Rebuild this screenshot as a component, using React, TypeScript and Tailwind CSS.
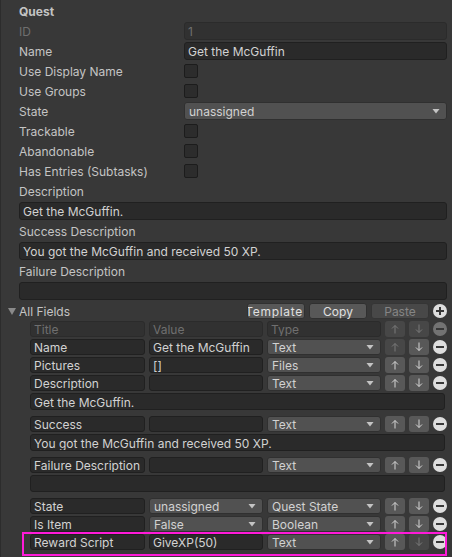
import React from 'react';

const LABEL = 'text-[#c4c4c4]';

function Field({ text, dim, className = '' }: { text?: string; dim?: boolean; className?: string }) {
  return (
    <div
      className={`flex items-center rounded-[3px] border pl-[3px] overflow-hidden whitespace-nowrap ${
        dim ? 'bg-[#313131] border-[#2b2b2b] text-[#6f6f6f]' : 'bg-[#2a2a2a] border-[#202020] text-[#d2d2d2]'
      } ${className}`}
    >
      <span className="translate-y-[1px]">{text}</span>
    </div>
  );
}

function Popup({ text, className = '' }: { text: string; className?: string }) {
  return (
    <div className={`flex items-center justify-between rounded-[3px] border border-[#303030] bg-[#515151] pl-[4px] pr-[6px] text-[#d2d2d2] whitespace-nowrap ${className}`}>
      <span className="translate-y-[1px]">{text}</span>
      <svg width="8" height="5" viewBox="0 0 8 5">
        <path d="M0.5 0h7L4 4.5z" fill="#c4c4c4" />
      </svg>
    </div>
  );
}

function Check() {
  return <div className="h-[14px] w-[14px] rounded-[2px] border border-[#1c1c1c] bg-[#2c2c2c]" />;
}

function Arrow({ up, dim }: { up?: boolean; dim?: boolean }) {
  const c = dim ? '#7a7a7a' : '#d6d6d6';
  return (
    <div
      className={`flex h-[16px] w-[20px] shrink-0 items-center justify-center rounded-[3px] ${
        dim ? 'bg-[#474747]' : 'bg-[#585858]'
      }`}
    >
      <svg width="8" height="10" viewBox="0 0 8 10" className={up ? '' : 'rotate-180'}>
        <path d="M4 1.5V9.5M1 4.5L4 1.5L7 4.5" stroke={c} strokeWidth="1" fill="none" />
      </svg>
    </div>
  );
}

function RoundIcon({ plus, dim }: { plus?: boolean; dim?: boolean }) {
  return (
    <div className="flex h-[16px] w-[14px] shrink-0 items-center justify-center">
      <svg width="14" height="14" viewBox="0 0 14 14">
        <circle cx="7" cy="7" r="7" fill={dim ? '#737373' : '#dedede'} />
        <rect x="3" y="6" width="8" height="2" fill="#383838" />
        {plus && <rect x="6" y="3" width="2" height="8" fill="#383838" />}
      </svg>
    </div>
  );
}

function Row({ label, children, bold, dim }: { label: string; children?: React.ReactNode; bold?: boolean; dim?: boolean }) {
  return (
    <div className="mb-[2px] flex h-[18px] items-center">
      <div className={`w-[165px] shrink-0 translate-y-[1px] ${bold ? 'font-bold' : ''} ${dim ? 'text-[#6f6f6f]' : LABEL}`}>{label}</div>
      <div className="flex h-full flex-1 items-center">{children}</div>
    </div>
  );
}

type Item = {
  title: string;
  value?: string;
  valuePopup?: boolean;
  type: string;
  upDim?: boolean;
  downDim?: boolean;
  area?: string;
  mark?: boolean;
};

const items: Item[] = [
  { title: 'Name', value: 'Get the McGuffin', type: 'Text', upDim: true },
  { title: 'Pictures', value: '[]', type: 'Files' },
  { title: 'Description', value: '', type: 'Text', area: 'Get the McGuffin.' },
  { title: 'Success', value: '', type: 'Text', area: 'You got the McGuffin and received 50 XP.' },
  { title: 'Failure Description', value: '', type: 'Text', area: '' },
  { title: 'State', value: 'unassigned', valuePopup: true, type: 'Quest State' },
  { title: 'Is Item', value: 'False', valuePopup: true, type: 'Boolean' },
  { title: 'Reward Script', value: 'GiveXP(50)', type: 'Text', downDim: true, mark: true },
];

function ListRow({ it }: { it: Item }) {
  return (
    <>
      <div className="relative mb-[2px] flex h-[16px] gap-[4px]">
        <Field text={it.title} className="h-[16px] w-[115px] shrink-0" />
        {it.valuePopup ? (
          <Popup text={it.value!} className="h-[16px] w-[114px] shrink-0" />
        ) : (
          <Field text={it.value} className="h-[16px] w-[114px] shrink-0" />
        )}
        <Popup text={it.type} className="h-[16px] w-[114px] shrink-0" />
        <Arrow up dim={it.upDim} />
        <Arrow dim={it.downDim} />
        <RoundIcon />
        {it.mark && (
          <div className="pointer-events-none absolute -left-[8px] -top-[2px] h-[24px] w-[425px] border-2 border-[#ff1ad9]" />
        )}
      </div>
      {it.area !== undefined && <Field text={it.area} className="mb-[6px] h-[17px] w-[415px]" />}
    </>
  );
}

export default function App() {
  return (
    <div className="min-h-[557px] w-[452px] overflow-hidden border-l border-[#2c2c2c] bg-[#383838] pl-[18px] pr-[5px] pt-[2px] font-[family-name:Inter,'Noto_Sans',sans-serif] text-[12px] leading-none">
      <Row label="Quest" bold />
      <Row label="ID" dim>
        <Field text="1" dim className="h-[18px] w-full" />
      </Row>
      <Row label="Name">
        <Field text="Get the McGuffin" className="h-[18px] w-full" />
      </Row>
      <Row label="Use Display Name">
        <Check />
      </Row>
      <Row label="Use Groups">
        <Check />
      </Row>
      <Row label="State">
        <Popup text="unassigned" className="h-[18px] w-full" />
      </Row>
      <Row label="Trackable">
        <Check />
      </Row>
      <Row label="Abandonable">
        <Check />
      </Row>
      <Row label="Has Entries (Subtasks)">
        <Check />
      </Row>
      <Row label="Description" />
      <Field text="Get the McGuffin." className="mb-[2px] h-[18px] w-full" />
      <Row label="Success Description" />
      <Field text="You got the McGuffin and received 50 XP." className="mb-[2px] h-[18px] w-full" />
      <Row label="Failure Description" />
      <Field className="mb-[2px] h-[18px] w-full" />

      <div className="mt-[2px] flex h-[18px] items-center">
        <div className="-ml-[11px] flex items-center">
          <svg width="8" height="7" viewBox="0 0 8 7">
            <path d="M0 0h8L4 7z" fill="#8a8a8a" />
          </svg>
          <span className={`ml-[3px] translate-y-[1px] ${LABEL}`}>All Fields</span>
        </div>
        <div className="ml-auto flex items-center gap-[4px]">
          <div className="flex h-[16px] w-[58px] items-center justify-end overflow-hidden whitespace-nowrap rounded-[3px] border border-[#303030] bg-[#585858] pr-[1px] text-[#e0e0e0]">
            <span className="translate-y-[1px] tracking-[0.7px]">Template</span>
          </div>
          <div className="flex h-[16px] w-[58px] items-center justify-center rounded-[3px] border border-[#303030] bg-[#585858] text-[#e0e0e0]">
            <span className="translate-y-[1px]">Copy</span>
          </div>
          <div className="flex h-[16px] w-[58px] items-center justify-center rounded-[3px] border border-[#353535] bg-[#484848] text-[#858585]">
            <span className="translate-y-[1px]">Paste</span>
          </div>
          <RoundIcon plus />
        </div>
      </div>

      <div className="mt-[1px] pl-[11px]">
        <div className="mb-[2px] flex h-[16px] gap-[4px]">
          <Field text="Title" dim className="h-[16px] w-[115px] shrink-0" />
          <Field text="Value" dim className="h-[16px] w-[114px] shrink-0" />
          <Field text="Type" dim className="h-[16px] w-[114px] shrink-0" />
          <Arrow up dim />
          <Arrow dim />
          <RoundIcon dim />
        </div>
        {items.map((it) => (
          <ListRow key={it.title} it={it} />
        ))}
      </div>
    </div>
  );
}
